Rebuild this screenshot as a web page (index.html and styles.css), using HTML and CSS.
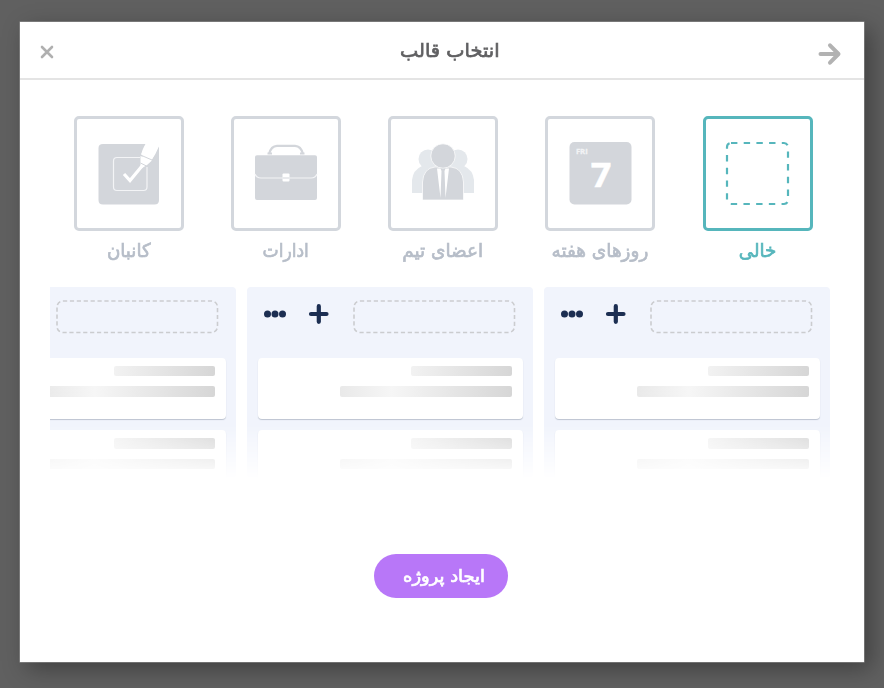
FILE: index.html
```html
<!DOCTYPE html>
<html lang="fa">
<head>
<meta charset="utf-8">
<title>انتخاب قالب</title>
<link rel="stylesheet" href="styles.css">
</head>
<body>
<main class="modal">
  <header class="head">
    <svg class="close" width="14" height="14" viewBox="0 0 14 14"><path d="M2 2 12 12M12 2 2 12"/></svg>
    <h1><span class="fit fit-title" dir="rtl">انتخاب قالب</span></h1>
    <svg class="next" width="24" height="24" viewBox="0 0 24 24"><path d="M2.500 12H20M12 3.300 20.500 12l-8.500 8.700"/></svg>
  </header>
  <section class="templates">
    <div class="template">
      <div class="tile">
        <svg width="62" height="62" viewBox="0 0 62 62">
          <path class="fill" d="M5 1H47.500Q44 7 43.500 11L46 17 53 18Q58 11 61 3V57Q61 61.500 56.500 61.500H5Q.500 61.500 .500 57V5Q.500 1 5 1Z"/>
          <path class="thin" d="M42 14.500H19Q15.500 14.500 15.500 18V44Q15.500 47.500 19 47.500H45.500Q49 47.500 49 44V24"/>
          <path class="tick" d="m26 31 6 6.500L44 23"/>
          <path class="white" d="m48 1-5 10.500 11 4.500 7-13V0Z"/>
          <path class="white" d="m42.500 13 11.500 4.500-5 4.500-6.500 4Z"/>
          <path class="ink" d="m42.500 12 11.500 5M42.500 20l6 3"/>
        </svg>
      </div>
      <p><span class="fit fit-kanban" dir="rtl">کانبان</span></p>
    </div>
    <div class="template">
      <div class="tile">
        <svg width="62" height="62" viewBox="0 0 62 62">
          <path class="handle" d="M14 11Q16 3 22 2.800H40Q46 3 48 11"/>
          <path class="fill" d="M12.500 9.500h4.500v2h-4.500zM45 9.500h4.500v2h-4.500zM2 12.200H60Q62 12.200 62 14V55Q62 57 60 57H2Q0 57 0 55V14Q0 12.200 2 12.200Z"/>
          <path class="thin" d="M0 31Q1.500 35 6 35H56Q60.500 35 62 31"/>
          <rect class="white" x="27.500" y="30.500" width="7" height="8" rx="1"/>
          <path class="ink" d="M27.500 35h7"/>
        </svg>
      </div>
      <p><span class="fit fit-offices" dir="rtl">ادارات</span></p>
    </div>
    <div class="template">
      <div class="tile">
        <svg width="62" height="62" viewBox="0 0 62 62">
          <g class="pale"><circle cx="16" cy="16" r="9.500"/><circle cx="46" cy="16" r="9.500"/>
          <path d="M0 50V37Q1 27 10 23H52Q61 27 62 37V50Z"/></g>
          <path class="person" d="M10.500 57V39Q11.500 25 23 24H39Q50.500 25 51.500 39V57Z"/>
          <circle class="person" cx="31" cy="13" r="12.200"/>
          <path class="white" d="M25 25.500H28.500L29.500 28 28.500 55ZM37 25.500H33.500L32.500 28 33.500 55Z"/>
        </svg>
      </div>
      <p><span class="fit fit-team" dir="rtl">اعضای تیم</span></p>
    </div>
    <div class="template">
      <div class="tile">
        <svg width="63" height="63" viewBox="0 0 64 64">
          <rect class="fill" x=".5" y="0" width="63" height="63.500" rx="5"/>
          <text class="day" x="7" y="12.500" textLength="12" lengthAdjust="spacingAndGlyphs">FRI</text>
          <text class="date" x="22" y="46" textLength="21" lengthAdjust="spacingAndGlyphs">7</text>
        </svg>
      </div>
      <p><span class="fit fit-week" dir="rtl">روزهای هفته</span></p>
    </div>
    <div class="template active">
      <div class="tile">
        <svg width="64" height="64" viewBox="0 0 64 64"><rect class="dash" x="1" y="1" width="61" height="61" rx="4"/></svg>
      </div>
      <p><span class="fit fit-empty" dir="rtl">خالی</span></p>
    </div>
  </section>
  <section class="board">
    <div class="column">
      <div class="tools">
        <svg width="64" height="22" viewBox="0 0 64 22"><g class="navy"><circle cx="3.500" cy="11" r="3.500"/><circle cx="11" cy="11" r="3.500"/><circle cx="18.500" cy="11" r="3.500"/></g><path class="plus" d="M47 11H62.500M54.800 3.200v15.600"/></svg>
        <svg class="slot" width="163" height="34" viewBox="0 0 163 34"><rect x="1" y="1" width="160.500" height="31.500" rx="6"/></svg>
      </div>
      <div class="card"><i class="bar short"></i><i class="bar long"></i></div>
      <div class="card"><i class="bar short"></i><i class="bar long"></i></div>
    </div>
    <div class="column">
      <div class="tools">
        <svg width="64" height="22" viewBox="0 0 64 22"><g class="navy"><circle cx="3.500" cy="11" r="3.500"/><circle cx="11" cy="11" r="3.500"/><circle cx="18.500" cy="11" r="3.500"/></g><path class="plus" d="M47 11H62.500M54.800 3.200v15.600"/></svg>
        <svg class="slot" width="163" height="34" viewBox="0 0 163 34"><rect x="1" y="1" width="160.500" height="31.500" rx="6"/></svg>
      </div>
      <div class="card"><i class="bar short"></i><i class="bar long"></i></div>
      <div class="card"><i class="bar short"></i><i class="bar long"></i></div>
    </div>
    <div class="column">
      <div class="tools">
        <svg width="64" height="22" viewBox="0 0 64 22"><g class="navy"><circle cx="3.500" cy="11" r="3.500"/><circle cx="11" cy="11" r="3.500"/><circle cx="18.500" cy="11" r="3.500"/></g><path class="plus" d="M47 11H62.500M54.800 3.200v15.600"/></svg>
        <svg class="slot" width="163" height="34" viewBox="0 0 163 34"><rect x="1" y="1" width="160.500" height="31.500" rx="6"/></svg>
      </div>
      <div class="card"><i class="bar short"></i><i class="bar long"></i></div>
      <div class="card"><i class="bar short"></i><i class="bar long"></i></div>
    </div>
  </section>
  <button class="create"><span class="fit fit-create" dir="rtl">ایجاد پروژه</span></button>
</main>
</body>
</html>
```
FILE: styles.css
```css
* { box-sizing: border-box; }
body { margin: 0; height: 688px; padding: 22px 20px 26px; overflow: hidden; background: #606060; font-family: "DejaVu Sans", sans-serif; }
svg { display: block; flex: none; fill: none; overflow: visible; }
.modal { width: 843.500px; height: 640px; background: #fff; box-shadow: 0 0 0 .5px #999, 7px 7px 22px rgba(0, 0, 0, .34); display: flex; flex-direction: column; }
.head { height: 58px; flex: none; border-bottom: 2px solid #e4e4e4; display: flex; align-items: center; justify-content: space-between; padding: 2px 22px 0 20px; }
.close { stroke: #b0b0b0; stroke-width: 2.6; stroke-linecap: round; margin-top: 2px; }
.next { stroke: #b2b2b2; stroke-width: 4; stroke-linecap: round; stroke-linejoin: round; margin-top: 6px; }
h1 { margin: 0 0 2px 29px; width: 160px; font-size: 19px; font-weight: normal; line-height: 24px; color: #606062; display: flex; justify-content: center; }
.fit { display: block; white-space: nowrap; -webkit-text-stroke: .7px currentColor; }
.fit-title { transform: scaleX(1.02); }
.fit-kanban { transform: scaleX(.96); }
.fit-offices { transform: scaleX(.9); }
.fit-team, .fit-week { transform: scaleX(.97); }
.fit-empty { transform: scaleX(.96); }
.fit-create { transform: scaleX(1.05); }
.templates { display: flex; justify-content: space-between; padding: 36px 51px 0 53.500px; height: 207px; flex: none; }
.template { width: 110px; display: flex; flex-direction: column; align-items: center; color: #b6bdc8; }
.tile { width: 110px; height: 115px; border: 3px solid #d3d7dd; border-radius: 5px; display: flex; align-items: center; justify-content: center; }
.template p { margin: 6px 0 0; font-size: 19px; line-height: 26px; }
.template.active { color: #56b6bc; }
.active .tile { border-color: #56b6bc; }
.fill { fill: #d3d6db; }
.person { fill: #d3d6db; stroke: #fff; stroke-width: .7; }
.pale { fill: #e4e8ec; }
.white { fill: #fff; }
.thin { stroke: #f3f4f6; stroke-width: 1.2; }
.tick { stroke: #fff; stroke-width: 3.2; }
.ink { stroke: #d3d6db; stroke-width: 1; }
.handle { stroke: #d3d6db; stroke-width: 2.2; }
.day { fill: #f2f3f5; stroke: #f2f3f5; stroke-width: .3; font: bold 7.500px "Open Sans", sans-serif; }
.date { fill: #fff; stroke: #fff; stroke-width: .5; font: bold 34px "Open Sans", sans-serif; }
.dash { stroke: #56b6bc; stroke-width: 2.2; stroke-dasharray: 6.4 6.3; }
.board { height: 193px; flex: none; margin: 0 33.500px 0 30px; display: flex; justify-content: flex-end; gap: 11px; overflow: hidden; -webkit-mask-image: linear-gradient(#000 138px, transparent 192px); mask-image: linear-gradient(#000 138px, transparent 192px); }
.column { width: 286px; flex: none; background: #f1f4fc; border-radius: 4px; padding: 13px 10.500px 0 11px; }
.tools { display: flex; justify-content: space-between; padding: 0 7px 0 5.500px; height: 57.500px; }
.tools svg:first-child { margin-top: 3px; }
.navy { fill: #1c2e52; }
.plus { stroke: #1c2e52; stroke-width: 4.200; stroke-linecap: round; }
.slot rect { stroke: #cbcccf; stroke-width: 1.600; stroke-dasharray: 4.200 2.700; }
.card { height: 61.500px; margin-bottom: 11px; padding: 8px 11px 0; background: #fff; border-radius: 4px; box-shadow: 0 1px 1px #bcc3d0; display: flex; flex-direction: column; align-items: flex-end; gap: 10px; }
.bar { height: 10.500px; border-radius: 2px; }
.short { width: 101px; background: linear-gradient(90deg, #f2f2f2, #d6d6d6); }
.long { width: 171.500px; background: linear-gradient(90deg, #e9e9e9, #f6f6f6 30%, #d6d6d6); }
.create { align-self: center; margin: 74px 2px 0 0; width: 134px; height: 44px; border: 0; border-radius: 22px; background: #b877f8; color: #fff; font: 17px "DejaVu Sans", sans-serif; padding: 0 0 0 7px; display: flex; align-items: center; justify-content: center; }
```
